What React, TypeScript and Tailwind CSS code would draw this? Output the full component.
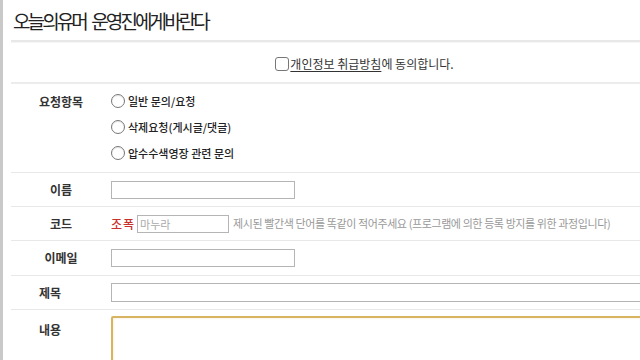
import React from "react";

const font = { fontFamily: '"Noto Sans CJK KR", "Noto Sans", sans-serif' };

const requestTypes = ["일반 문의/요청", "삭제요청(게시글/댓글)", "압수수색영장 관련 문의"];

const Radio: React.FC<{ label: string }> = ({ label }) => (
  <label className="flex items-center gap-[3px] h-[26px]">
    <span className="w-[14px] h-[14px] rounded-full border border-[#777] bg-white shadow-[inset_0_1px_1px_rgba(0,0,0,0.1)]" />
    <span className="text-[11px] text-[#222] font-medium">{label}</span>
  </label>
);

const Label: React.FC<{ children: React.ReactNode; left?: boolean }> = ({ children, left }) => (
  <div className={left ? "w-[100px] shrink-0 pl-[28px] text-[12px] font-bold text-[#333]" : "w-[100px] shrink-0 text-center text-[12px] font-bold text-[#333]"}>
    {children}
  </div>
);

const App: React.FC = () => {
  return (
    <div className="flex w-[640px] h-[360px] overflow-hidden bg-white" style={font}>
      <div className="w-[3px] shrink-0 bg-[#c9c9c9]" />
      <div className="flex-1 ml-[8px] min-w-0">
        {/* title */}
        <div className="h-[40px] flex items-center pl-[2px]">
          <h1 className="text-[19px] tracking-[-2.9px] [word-spacing:4px] text-[#222] leading-none">오늘의유머 운영진에게바란다</h1>
        </div>
        <div className="h-[2px] bg-[#e8e8e8]" />
        <div className="h-[40px] flex items-center justify-center border-t border-[#f5f5f5] pl-[78px] pt-[2px]">
          <span className="w-[14px] h-[14px] rounded-[3px] border border-[#777] bg-white mr-[1px]" />
          <span className="text-[12px] text-[#333] underline underline-offset-2">개인정보 취급방침</span>
          <span className="text-[12px] text-[#333]">에 동의합니다.</span>
        </div>
        <div className="h-[2px] bg-[#ececec]" />

        {/* request type */}
        <div className="flex h-[89px] border-b border-[#e8e8e8] pt-[4px]">
          <div className="w-[100px] shrink-0 text-center text-[12px] font-bold text-[#333] pt-[5px]">요청항목</div>
          <div className="flex flex-col">
            {requestTypes.map((t) => (
              <Radio key={t} label={t} />
            ))}
          </div>
        </div>

        <div className="flex items-center h-[34px] border-b border-[#e8e8e8]">
          <Label>이름</Label>
          <input className="w-[184px] h-[18px] border border-[#b5b5b5] bg-white" />
        </div>

        <div className="flex items-center h-[34px] border-b border-[#e8e8e8]">
          <Label>코드</Label>
          <span className="text-[12px] text-[#c8302c] font-medium tracking-[1px] mr-[2px]">조폭</span>
          <input
            placeholder="마누라"
            className="w-[92px] h-[18px] border border-[#b5b5b5] bg-white px-[2px] text-[11px] placeholder:text-[#aaa]"
          />
          <span className="ml-[4px] text-[11px] text-[#999] tracking-[-0.4px] whitespace-nowrap">
            제시된 빨간색 단어를 똑같이 적어주세요 (프로그램에 의한 등록 방지를 위한 과정입니다)
          </span>
        </div>

        <div className="flex items-center h-[35px] border-b border-[#e8e8e8]">
          <Label>이메일</Label>
          <input className="w-[184px] h-[18px] border border-[#b5b5b5] bg-white" />
        </div>

        <div className="flex items-center h-[34px] border-b border-[#e8e8e8]">
          <Label left>제목</Label>
          <input className="w-[560px] shrink-0 h-[19px] border border-[#b5b5b5] bg-white" />
        </div>

        <div className="flex pt-[6px]">
          <div className="w-[100px] shrink-0 pl-[28px] text-[12px] font-bold text-[#333] pt-[5px]">내용</div>
          <div className="w-[560px] shrink-0 h-[80px] border-2 border-[#d8b460] rounded-[2px] bg-white shadow-[inset_0_0_2px_rgba(216,180,96,0.4)]" />
        </div>
      </div>
    </div>
  );
};

export default App;
